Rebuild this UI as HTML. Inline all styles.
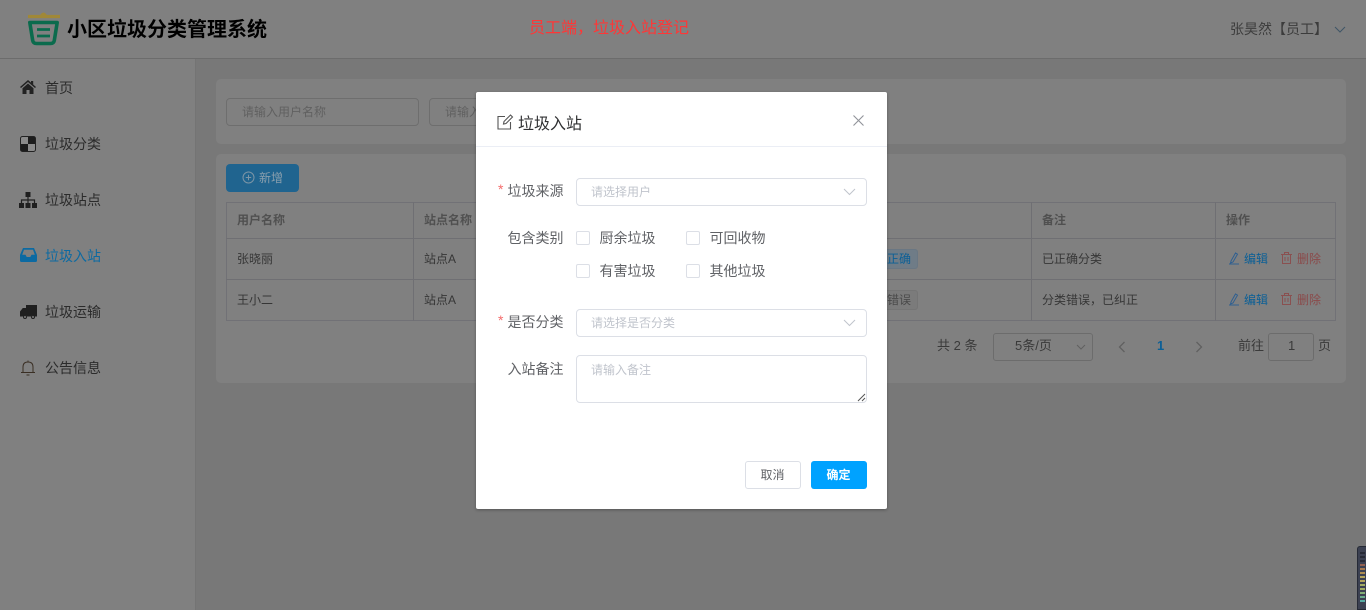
<!DOCTYPE html>
<html lang="zh"><head><meta charset="utf-8"><title>小区垃圾分类管理系统</title>
<style>
html{margin:0;padding:0;width:1366px;height:610px;overflow:hidden}
body{margin:0;padding:0;width:1366px;height:610px;position:relative;overflow:hidden;background:#787878;font-family:"Liberation Sans","Noto Sans CJK SC",sans-serif;color:#333}
#wrap{position:absolute;left:0;top:0;width:1366px;height:610px;overflow:hidden}
.b{position:absolute;box-sizing:border-box}
.t{position:absolute;white-space:nowrap;line-height:20px;height:20px}
svg{position:absolute;overflow:visible}
.hd{font-size:12px;font-weight:700;color:#505050}
.cell{font-size:12px;color:#363636}
.nav{font-size:14px;color:#2b2b2b;left:45px}
.line{background:#6f6f73}
.m{font-size:14px;color:#606266}
.ph{font-size:12px;color:#c0c4cc}
.ck{position:absolute;width:14px;height:14px;border:1px solid #dcdfe6;border-radius:2px;box-sizing:border-box;background:#fff}
.edit{font-size:12px;color:#0b5f96}
.del{font-size:12px;color:#8a4a4a}
</style></head><body><div id="wrap">

<!-- header -->
<div class="b" style="left:0;top:0;width:1366px;height:59px;background:#808080;border-bottom:1px solid #6c6c6c"></div>
<svg style="left:0;top:0" width="80" height="58" viewBox="0 0 80 58">
<path d="M28 16.500H60" stroke="#a08838" stroke-width="3.200" fill="none"/>
<path d="M40 15.500Q41 13 43.500 12.500Q46 13 47 15.500Z" fill="#a08838"/>
<path d="M29.800 22.500H57.200L54.300 40.500Q53.800 43.500 50.500 43.500H36.500Q33.200 43.500 32.700 40.500Z" stroke="#0b6b4d" stroke-width="3.600" fill="none" stroke-linejoin="round"/>
<path d="M37 29.500H50M37 36H50" stroke="#0b6b4d" stroke-width="2.800" fill="none"/>
</svg>
<div class="t" style="left:67px;top:20px;font-size:20px;font-weight:700;color:#000;line-height:20px">小区垃圾分类管理系统</div>
<div class="t" style="left:529px;top:19px;font-size:16px;color:#ff3636">员工端，垃圾入站登记</div>
<div class="t" style="left:1230px;top:19px;font-size:14px;color:#3c3c3c">张昊然【员工】</div>
<svg style="left:1334px;top:26px" width="12" height="7"><path d="M1 1L6 6L11 1" stroke="#3f5566" stroke-width="1" fill="none"/></svg>

<!-- sidebar -->
<div class="b" style="left:0;top:59px;width:196px;height:551px;background:#808080;border-right:1px solid #747474"></div>
<svg style="left:20px;top:80px" width="16" height="14" viewBox="0 0 16 14"><path d="M0 7L8 0L11 2.600V1H13.200V4.500L16 7L15 8L8 2L1 8ZM2.500 8.200L8 3.500L13.500 8.200V14H9.500V10H6.500V14H2.500Z" fill="#222"/></svg>
<div class="t nav" style="top:78px">首页</div>

<svg style="left:20px;top:136px" width="16" height="16" viewBox="0 0 16 16"><rect x=".5" y=".5" width="15" height="15" rx="2" fill="#8a8a8a" stroke="#222"/><rect x="8" y="1" width="7" height="7" fill="#1c1c1c"/><rect x="1" y="8" width="7" height="7" fill="#1c1c1c"/></svg>
<div class="t nav" style="top:134px">垃圾分类</div>

<svg style="left:19px;top:192px" width="18" height="16" viewBox="0 0 18 16"><path d="M6.500 0H11.500V5H6.500ZM0 11H5V16H0ZM6.500 11H11.500V16H6.500ZM13 11H18V16H13Z" fill="#1f1f1f"/><path d="M2.500 11V8H15.500V11M9 5V11" stroke="#1f1f1f" stroke-width="1.200" fill="none"/></svg>
<div class="t nav" style="top:190px">垃圾站点</div>

<svg style="left:20px;top:248px" width="17" height="14" viewBox="0 0 17 14"><path d="M3 0H14L17 7V12.500Q17 14 15.500 14H1.500Q0 14 0 12.500V7ZM4 1.800L2.200 6.800H5.500L6.700 9H10.300L11.500 6.800H14.800L13 1.800Z" fill="#0c6aa2" fill-rule="evenodd"/></svg>
<div class="t nav" style="top:246px;color:#0c6aa2">垃圾入站</div>

<svg style="left:20px;top:305px" width="17" height="14" viewBox="0 0 17 14"><path d="M6 0H17V11.500H14.800A2 2 0 0 0 11 11.500H7A2 2 0 0 0 3.200 11.500H0V6.500L2.800 3H6Z" fill="#1f1f1f"/><circle cx="5" cy="12" r="1.500" fill="none" stroke="#1f1f1f"/><circle cx="13" cy="12" r="1.500" fill="none" stroke="#1f1f1f"/></svg>
<div class="t nav" style="top:302px">垃圾运输</div>

<svg style="left:20px;top:360px" width="16" height="16" viewBox="0 0 16 16"><path d="M1 12.500H15M3 12.500V7Q3 2 8 2Q13 2 13 7V12.500M8 2V.5M6.500 15H9.500" stroke="#3a2f24" stroke-width="1" fill="none"/></svg>
<div class="t nav" style="top:358px">公告信息</div>

<!-- search card -->
<div class="b" style="left:216px;top:79px;width:1130px;height:65px;background:#808080;border-radius:5px"></div>
<div class="b" style="left:226px;top:98px;width:193px;height:28px;border:1px solid #6e6e6e;border-radius:4px"></div>
<div class="t" style="left:242px;top:102px;font-size:12px;color:#606060">请输入用户名称</div>
<div class="b" style="left:429px;top:98px;width:193px;height:28px;border:1px solid #6e6e6e;border-radius:4px"></div>
<div class="t" style="left:445px;top:102px;font-size:12px;color:#606060">请输入站点名称</div>

<!-- table card -->
<div class="b" style="left:216px;top:154px;width:1130px;height:229px;background:#808080;border-radius:5px"></div>
<div class="b" style="left:226px;top:164px;width:73px;height:28px;background:#20648f;border-radius:4px"></div>
<svg style="left:242px;top:171px" width="13" height="13" viewBox="0 0 13 13"><circle cx="6.500" cy="6.500" r="5.500" fill="none" stroke="#7c95a6"/><path d="M6.500 3.800V9.200M3.800 6.500H9.200" stroke="#7c95a6"/></svg>
<div class="t" style="left:259px;top:168px;font-size:12px;color:#8a9fad">新增</div>

<!-- table grid -->
<div class="b" style="left:226px;top:202px;width:1110px;height:119px;border:1px solid #717176"></div>
<div class="b line" style="left:226px;top:238px;width:1110px;height:1px"></div>
<div class="b line" style="left:226px;top:279px;width:1110px;height:1px"></div>
<div class="b line" style="left:413px;top:202px;width:1px;height:119px"></div>
<div class="b line" style="left:1031px;top:202px;width:1px;height:119px"></div>
<div class="b line" style="left:1215px;top:202px;width:1px;height:119px"></div>

<div class="t hd" style="left:237px;top:210px">用户名称</div>
<div class="t hd" style="left:424px;top:210px">站点名称</div>
<div class="t hd" style="left:1042px;top:210px">备注</div>
<div class="t hd" style="left:1226px;top:210px">操作</div>

<div class="t cell" style="left:237px;top:249px">张晓丽</div>
<div class="t cell" style="left:424px;top:249px">站点A</div>
<div class="t cell" style="left:1042px;top:249px">已正确分类</div>
<div class="t cell" style="left:237px;top:290px">王小二</div>
<div class="t cell" style="left:424px;top:290px">站点A</div>
<div class="t cell" style="left:1042px;top:290px">分类错误，已纠正</div>

<div class="b" style="left:860px;top:249px;width:58px;height:20px;background:#6f7c87;border:1px solid #6a7783;border-radius:3px"></div>
<div class="t" style="left:887px;top:249px;font-size:12px;color:#0b5f96">正确</div>
<div class="b" style="left:860px;top:290px;width:58px;height:20px;background:#7b7b7b;border:1px solid #757575;border-radius:3px"></div>
<div class="t" style="left:887px;top:290px;font-size:12px;color:#4a4a4a">错误</div>

<svg style="left:1228px;top:252px" width="11" height="13" viewBox="0 0 11 13"><path d="M3 9L7.500 1L9.500 2.200L5 10L2.500 11ZM1 12H11" stroke="#2f5f90" fill="none"/></svg>
<div class="t edit" style="left:1244px;top:249px">编辑</div>
<svg style="left:1281px;top:252px" width="11" height="12" viewBox="0 0 11 12"><path d="M0 2.500H11M3.500 2.500V.5H7.500V2.500M1.500 2.500V11.500H9.500V2.500M4 5V9M7 5V9" stroke="#8a5050" fill="none"/></svg>
<div class="t del" style="left:1297px;top:249px">删除</div>
<svg style="left:1228px;top:293px" width="11" height="13" viewBox="0 0 11 13"><path d="M3 9L7.500 1L9.500 2.200L5 10L2.500 11ZM1 12H11" stroke="#2f5f90" fill="none"/></svg>
<div class="t edit" style="left:1244px;top:290px">编辑</div>
<svg style="left:1281px;top:293px" width="11" height="12" viewBox="0 0 11 12"><path d="M0 2.500H11M3.500 2.500V.5H7.500V2.500M1.500 2.500V11.500H9.500V2.500M4 5V9M7 5V9" stroke="#8a5050" fill="none"/></svg>
<div class="t del" style="left:1297px;top:290px">删除</div>

<!-- pagination -->
<div class="t" style="left:937px;top:336px;font-size:13px;color:#3a3a3a">共 2 条</div>
<div class="b" style="left:993px;top:333px;width:100px;height:28px;border:1px solid #6c6c6c;border-radius:3px"></div>
<div class="t" style="left:1015px;top:336px;font-size:13px;color:#3a3a3a">5条/页</div>
<svg style="left:1076px;top:344px" width="10" height="6"><path d="M1 1L5 5L9 1" stroke="#606060" fill="none"/></svg>
<svg style="left:1118px;top:341px" width="8" height="12"><path d="M6.500 1L1.500 6L6.500 11" stroke="#606060" stroke-width="1.300" fill="none"/></svg>
<div class="t" style="left:1157px;top:336px;font-size:13px;font-weight:700;color:#0b5f96">1</div>
<svg style="left:1195px;top:341px" width="8" height="12"><path d="M1.500 1L6.500 6L1.500 11" stroke="#606060" stroke-width="1.300" fill="none"/></svg>
<div class="t" style="left:1238px;top:336px;font-size:13px;color:#3a3a3a">前往</div>
<div class="b" style="left:1268px;top:333px;width:46px;height:28px;border:1px solid #6c6c6c;border-radius:3px"></div>
<div class="t" style="left:1288px;top:336px;font-size:13px;color:#3a3a3a">1</div>
<div class="t" style="left:1318px;top:336px;font-size:13px;color:#3a3a3a">页</div>

<!-- widget -->
<div class="b" style="left:1357px;top:546px;width:12px;height:64px;background:#3c4152;border:1px solid #262a36;border-radius:3px 0 0 0"></div>
<svg style="left:1360px;top:552px" width="6" height="50">
<g stroke-width="1.500">
<path d="M0 1H5M0 5H5M0 9H5" stroke="#20232e"/>
<path d="M0 13H5" stroke="#b06a50"/><path d="M0 17H5" stroke="#c98a4e"/><path d="M0 21H5" stroke="#d2a54f"/>
<path d="M0 25H5M0 29H5" stroke="#d9c45e"/><path d="M0 33H5M0 37H5" stroke="#c4cf6a"/>
<path d="M0 41H5" stroke="#9cd283"/><path d="M0 45H5" stroke="#78cf9d"/><path d="M0 49H5" stroke="#60d0c0"/>
</g></svg>

<!-- modal -->
<div class="b" style="left:476px;top:92px;width:411px;height:417px;background:#fff;border-radius:2px;box-shadow:0 1px 3px rgba(0,0,0,.3)"></div>
<div class="b" style="left:476px;top:146px;width:411px;height:1px;background:#ebeef5"></div>
<svg style="left:497px;top:114px" width="16" height="16" viewBox="0 0 16 16"><path d="M8 2.500H1V15H13.500V8M6.500 10L7 7.500L13.500 1L15.500 3L9 9.500Z" stroke="#555" stroke-width="1.100" fill="none"/></svg>
<div class="t" style="left:518px;top:115px;font-size:16px;color:#303133">垃圾入站</div>
<svg style="left:853px;top:115px" width="11" height="11"><path d="M.5 .5L10.500 10.500M10.500 .5L.5 10.500" stroke="#909399" stroke-width="1.100"/></svg>

<div class="t" style="left:498px;top:179px;font-size:14px;color:#f56c6c">*</div>
<div class="t m" style="left:507.500px;top:181px">垃圾来源</div>
<div class="b" style="left:576px;top:178px;width:291px;height:28px;border:1px solid #dcdfe6;border-radius:4px"></div>
<div class="t ph" style="left:591px;top:182px">请选择用户</div>
<svg style="left:843px;top:188px" width="13" height="8"><path d="M1 1L6.500 6.500L12 1" stroke="#c0c4cc" fill="none"/></svg>

<div class="t m" style="left:507.500px;top:228px">包含类别</div>
<div class="ck" style="left:576px;top:231px"></div>
<div class="t m" style="left:599.500px;top:228px">厨余垃圾</div>
<div class="ck" style="left:686px;top:231px"></div>
<div class="t m" style="left:709.500px;top:228px">可回收物</div>
<div class="ck" style="left:576px;top:264px"></div>
<div class="t m" style="left:599.500px;top:261px">有害垃圾</div>
<div class="ck" style="left:686px;top:264px"></div>
<div class="t m" style="left:709.500px;top:261px">其他垃圾</div>

<div class="t" style="left:498px;top:310px;font-size:14px;color:#f56c6c">*</div>
<div class="t m" style="left:507.500px;top:312px">是否分类</div>
<div class="b" style="left:576px;top:309px;width:291px;height:28px;border:1px solid #dcdfe6;border-radius:4px"></div>
<div class="t ph" style="left:591px;top:313px">请选择是否分类</div>
<svg style="left:843px;top:319px" width="13" height="8"><path d="M1 1L6.500 6.500L12 1" stroke="#c0c4cc" fill="none"/></svg>

<div class="t m" style="left:507.500px;top:359px">入站备注</div>
<div class="b" style="left:576px;top:355px;width:291px;height:48px;border:1px solid #dcdfe6;border-radius:4px"></div>
<div class="t ph" style="left:591px;top:360px">请输入备注</div>
<svg style="left:857px;top:393px" width="9" height="9"><path d="M1 8L8 1M5 8L8 5" stroke="#555" fill="none"/></svg>

<div class="b" style="left:745px;top:461px;width:56px;height:28px;border:1px solid #dcdfe6;border-radius:3px;background:#fff"></div>
<div class="t" style="left:760.500px;top:465px;font-size:12px;color:#606266">取消</div>
<div class="b" style="left:811px;top:461px;width:56px;height:28px;background:#00a2ff;border-radius:3px"></div>
<div class="t" style="left:826.500px;top:465px;font-size:12px;font-weight:700;color:#fff">确定</div>

</div></body></html>
